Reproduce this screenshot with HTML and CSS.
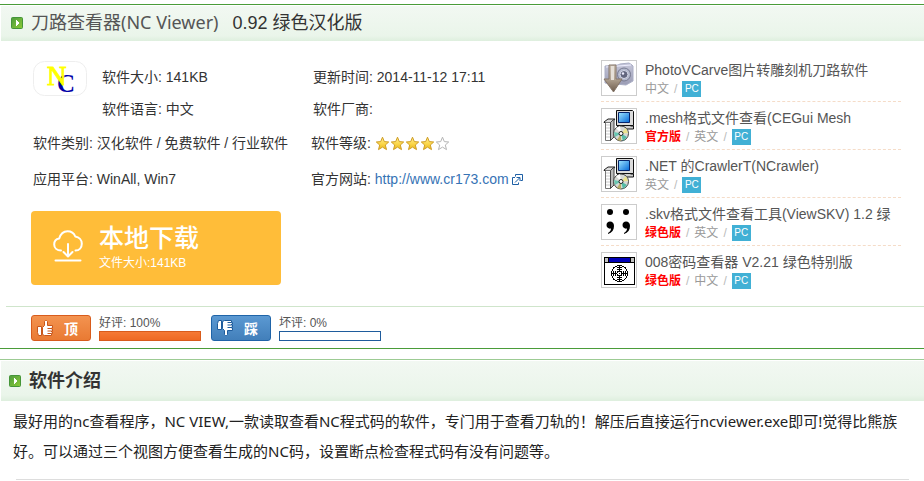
FILE: index.html
```html
<!DOCTYPE html>
<html lang="zh-CN">
<head>
<meta charset="utf-8">
<title>刀路查看器(NC Viewer)</title>
<link rel="stylesheet" href="styles.css">
</head>
<body>
<svg class="defs" aria-hidden="true">
  <defs>
    <linearGradient id="gold" x1="0" y1="0" x2="0" y2="1">
      <stop offset="0" stop-color="#fff0a0"/><stop offset=".5" stop-color="#fbd84e"/><stop offset="1" stop-color="#e9b91c"/>
    </linearGradient>
    <linearGradient id="leaf" x1="0" y1="0" x2="1" y2="1">
      <stop offset="0" stop-color="#4d9c3e"/><stop offset="1" stop-color="#8ccb36"/>
    </linearGradient>
    <linearGradient id="screen" x1="0" y1="0" x2="1" y2="1">
      <stop offset="0" stop-color="#9fe6ff"/><stop offset="1" stop-color="#0468d8"/>
    </linearGradient>
    <linearGradient id="metal" x1="0" y1="0" x2="0" y2="1">
      <stop offset="0" stop-color="#c9bdae"/><stop offset=".5" stop-color="#b3a594"/><stop offset="1" stop-color="#6d5b4c"/>
    </linearGradient>
    <linearGradient id="camera" x1="0" y1="0" x2="0" y2="1">
      <stop offset="0" stop-color="#c6c7da"/><stop offset="1" stop-color="#9a9cb4"/>
    </linearGradient>
    <symbol id="arrow" viewBox="0 0 12 12">
      <rect x=".5" y=".5" width="11" height="11" rx="1" fill="url(#leaf)" stroke="#459539"/>
      <path d="M5 3v6h1V8h1V7h1V5H7V4H6V3z" fill="#fff"/>
    </symbol>
    <symbol id="star" viewBox="0 0 15 15">
      <path d="M7.5 1.2 9.3 5.6l4.400.4-3.400 3 1.200 4.600-4-2.500-4 2.500L4.700 9 1.300 6l4.400-.4z" stroke-linejoin="round"/>
    </symbol>
    <symbol id="thumb" viewBox="0 0 16 16">
      <path d="M.500 6.500h4v9h-3l-1-3zM5.500 7.500l2-2v-4l1-1h1l1 1v4h5v2.500h-1v1h1v2h-1v1h1v1.500h-1v2H7.500l-2-1z" fill="#fff" stroke-linejoin="round"/>
      <path d="M10.500 8.500h4M10.500 11h4M10.500 13.500h4" fill="none"/>
    </symbol>
    <symbol id="setup" viewBox="0 0 32 32">
      <path d="M13.500.500h16l1 1v14h-17z" fill="#dcdcdc" stroke="#111"/>
      <path d="M15.500 2.500h11v10h-11z" fill="url(#screen)" stroke="#06246b"/>
      <path d="M27.500 16h3v3h-16v-3" fill="#cfcfcf" stroke="#111"/>
      <path d="M1 12l4-3h7l-3 3.500H1z" fill="#ddd" stroke="#222"/>
      <path d="M2.500 12.500h5v18h-5z" fill="#fff" stroke="#777"/>
      <path d="M3 15h4M3 18h4M3 21h4M3 24h4M3 27h4" stroke="#ccc"/>
      <path d="M7.500 12.500 11 9v18l-3.500 3.500z" fill="#bbb" stroke="#444"/>
      <circle cx="18" cy="23.500" r="7.500" fill="#d7d9d5" stroke="#444"/>
      <path d="M18 23.500 13 18l4-2z" fill="#fff"/><path d="M18 23.500 11 22l1 5z" fill="#68c7b1"/>
      <path d="M18 23.500 23 18l2 5z" fill="#ede48d"/><path d="M18 23.500 20 31l4-4z" fill="#55bca6"/>
      <path d="M18 23.500 14 30l4 1z" fill="#b8ad64"/>
      <circle cx="18" cy="23.500" r="2" fill="#fff" stroke="#222"/>
    </symbol>
  </defs>
</svg>

<section class="panel">
  <header class="bar">
    <svg class="bullet"><use href="#arrow"/></svg>
    <h1 class="name"><span class="product">刀路查看器(NC Viewer)</span> <span>0.92 绿色汉化版</span></h1>
  </header>

  <div class="main">
    <div class="info">
      <div class="top">
        <svg class="logo" viewBox="0 0 54 35" role="img" aria-label="NC">
          <rect x=".5" y=".5" width="53" height="34" rx="11" fill="#fff" stroke="#eee"/>
          <text x="24" y="31" class="logo-c">C</text>
          <text x="14" y="24" class="logo-n">N</text>
        </svg>
        <div class="facts facts-top">
          <span>软件大小: 141KB</span><span>更新时间: 2014-11-12 17:11</span>
          <span>软件语言: 中文</span><span>软件厂商:</span>
        </div>
      </div>
      <div class="facts facts-low">
        <span>软件类别: 汉化软件 / 免费软件 / 行业软件</span>
        <span class="rating">软件等级:
          <span class="stars" role="img" aria-label="4/5">
            <svg class="star"><use href="#star"/></svg><svg class="star"><use href="#star"/></svg><svg class="star"><use href="#star"/></svg><svg class="star"><use href="#star"/></svg><svg class="star empty"><use href="#star"/></svg>
          </span>
        </span>
        <span>应用平台: WinAll, Win7</span>
        <span>官方网站: <a class="site" href="#">http://www.cr173.com<svg class="external" viewBox="0 0 11 11"><path d="M3.500.500h7v6h-2M3.500.500v2M3 3.500H.500v7h6v-2M3 8.500l4.500-4.500M4.500 3.500h3.500v3.500" fill="none" stroke="#1d5fa5"/></svg></a></span>
      </div>
      <a class="download" href="#">
        <svg class="cloud" viewBox="0 0 30 32"><path d="M8 20.500C4 20.500 1.200 18 1.200 14.500c0-3.300 2-5.500 5-6C7.500 4 10.500 1.200 14.500 1.200c4 0 6.500 2 7.800 5.300 3.800.5 6.500 3.500 6.500 7.200 0 3.800-2.500 6.800-6.300 6.800M15 14v12M10.500 22l4.500 4.500 4.500-4.500M2.500 30.500h25" fill="none" stroke="#fff" stroke-width="2" stroke-linecap="round" stroke-linejoin="round"/></svg>
        <span class="download-text"><span class="download-title">本地下载</span><span class="download-size">文件大小:141KB</span></span>
      </a>
    </div>

    <ul class="related">
      <li>
        <svg class="thumbnail" viewBox="0 0 32 32">
          <path d="M2 4 15 3l2-1 9-1 3 2 1 1v15l-7 4-21-2z" fill="url(#camera)" stroke="#aaaec5"/>
          <path d="M3 5 28 3" stroke="#eef"/>
          <circle cx="21" cy="12.500" r="6.500" fill="#b4b9cd" stroke="#777a90"/>
          <circle cx="21" cy="12.500" r="4" fill="#62667e" stroke="#d7daea"/>
          <circle cx="20" cy="11.500" r="1.200" fill="#eef"/>
          <path d="M6 3h7v14h6L10.500 30 1 17h5z" fill="url(#metal)" stroke="#85766a"/>
          <path d="M8 4h3v14H8z" fill="#e6e0d8"/>
        </svg>
        <div><a class="soft" href="#">PhotoVCarve图片转雕刻机刀路软件</a><p class="meta"><span>中文</span><i>/</i><b class="pc">PC</b></p></div>
      </li>
      <li>
        <svg class="thumbnail"><use href="#setup"/></svg>
        <div><a class="soft" href="#">.mesh格式文件查看(CEGui Mesh</a><p class="meta"><strong>官方版</strong><i>/</i><span>英文</span><i>/</i><b class="pc">PC</b></p></div>
      </li>
      <li>
        <svg class="thumbnail"><use href="#setup"/></svg>
        <div><a class="soft" href="#">.NET 的CrawlerT(NCrawler)</a><p class="meta"><span>英文</span><i>/</i><b class="pc">PC</b></p></div>
      </li>
      <li>
        <svg class="thumbnail" viewBox="0 0 32 32">
          <circle cx="7" cy="6" r="3"/><circle cx="23" cy="6" r="3"/>
          <path d="M7 15.500c2.500 0 4 1.600 4 4.500 0 4-2 6.800-6 8v-1c2-1.200 3-2.800 3-4.500-2.500.6-4.500-1-4.500-3.500 0-2 1.500-3.500 3.500-3.500zM23 15.500c2.500 0 4 1.600 4 4.500 0 4-2 6.800-6 8v-1c2-1.200 3-2.800 3-4.500-2.500.6-4.500-1-4.500-3.500 0-2 1.500-3.500 3.500-3.500z"/>
        </svg>
        <div><a class="soft" href="#">.skv格式文件查看工具(ViewSKV) 1.2 绿</a><p class="meta"><strong>绿色版</strong><i>/</i><span>英文</span><i>/</i><b class="pc">PC</b></p></div>
      </li>
      <li>
        <svg class="thumbnail" viewBox="0 0 32 32" shape-rendering="crispEdges">
          <path d="M1.500 3.500h30v27h-30z" fill="#fff" stroke="#000"/>
          <path d="M2 4h29v4H2z" fill="#0000b8"/><path d="M2 4h3v4H2zM28 4h3v4h-3z" fill="#c0c0c0"/>
          <path d="M1 8.500h31M5.500 4v4M27.500 4v4" stroke="#000"/>
          <circle cx="16.500" cy="19.500" r="8" fill="none" stroke="#000"/>
          <circle cx="16.500" cy="19.500" r="2.500" fill="none" stroke="#000"/>
          <path d="M16.500 11v6M16.500 22v6M8 19.500h6M19 19.500h6M14 13.500h5M14 15.500h5M14 23.500h5M14 25.500h5M10.500 17v5M12.500 17v5M20.500 17v5M22.500 17v5M16 19.500h1" fill="none" stroke="#000"/>
        </svg>
        <div><a class="soft" href="#">008密码查看器 V2.21 绿色特别版</a><p class="meta"><strong>绿色版</strong><i>/</i><span>中文</span><i>/</i><b class="pc">PC</b></p></div>
      </li>
    </ul>
  </div>

  <div class="votes">
    <button class="vote up" type="button"><svg class="hand"><use href="#thumb"/></svg>顶</button>
    <div class="score good"><span>好评: 100%</span><div class="track"><div class="fill" style="width:100%"></div></div></div>
    <button class="vote down" type="button"><svg class="hand"><use href="#thumb"/></svg>踩</button>
    <div class="score bad"><span>坏评: 0%</span><div class="track"><div class="fill" style="width:0%"></div></div></div>
  </div>
</section>

<section class="intro">
  <header class="bar intro-bar">
    <svg class="bullet"><use href="#arrow"/></svg>
    <h2 class="name">软件介绍</h2>
  </header>
  <p class="description">最好用的nc查看程序，NC VIEW,一款读取查看NC程式码的软件，专门用于查看刀轨的！解压后直接运行ncviewer.exe即可!觉得比熊族好。可以通过三个视图方便查看生成的NC码，设置断点检查程式码有没有问题等。</p>
  <hr class="rule">
</section>
</body>
</html>
```

FILE: styles.css
```css
* {
  box-sizing: border-box;
}

body {
  margin: 0;
  padding-top: 4px;
  background: #fff;
  color: #333;
  font: 14px/20px "Liberation Sans", "Noto Sans CJK SC", sans-serif;
}

h1, h2, p, ul {
  margin: 0;
  padding: 0;
}

a {
  text-decoration: none;
}

svg {
  display: block;
  flex: none;
}

.defs {
  position: absolute;
  width: 0;
  height: 0;
}

.panel {
  border-top: 1px solid #4a9c39;
  border-bottom: 1px solid #4a9c39;
}

.bar {
  display: flex;
  align-items: center;
  gap: 8px;
  height: 36px;
  margin-left: 1px;
  padding: 0 10px 2px;
  border-top: 1px solid #fff;
  background: linear-gradient(#f2f8f2, #eaf5ea 85%, #deefde);
}

.bullet {
  width: 12px;
  height: 12px;
}

.name {
  font-size: 18px;
  line-height: 26px;
  font-weight: 400;
}

.name span + span {
  margin-left: 9px;
}

.product {
  color: #555;
  font-family: "Noto Sans", "Noto Sans CJK SC", sans-serif;
}

.main {
  display: flex;
  justify-content: space-between;
  padding: 13px 23px 0 31px;
}

.info {
  padding-top: 7px;
}

.top {
  display: flex;
  gap: 15px;
  padding-left: 2px;
}

.logo {
  width: 54px;
  height: 35px;
}

.logo-n {
  font: 27px "Liberation Serif", serif;
  fill: #ff0;
  stroke: #ff0;
}

.logo-c {
  font: bold 25px "Liberation Serif", serif;
  fill: #0000a8;
}

.facts {
  display: grid;
  white-space: nowrap;
}

.facts-top {
  grid-template-columns: 211px auto;
  row-gap: 12px;
  padding-top: 6px;
}

.facts-low {
  grid-template-columns: 278px auto;
  row-gap: 16px;
  padding: 14px 0 0 2px;
}

.rating,
.stars {
  display: flex;
  align-items: center;
}

.rating {
  gap: 4px;
}

.star {
  width: 15px;
  height: 15px;
  fill: url(#gold);
  stroke: #cf9d22;
}

.empty {
  fill: #fff;
  stroke: #b5b5b5;
}

.site {
  color: #3673b5;
}

.external {
  display: inline-block;
  width: 11px;
  height: 11px;
  margin-left: 3px;
  vertical-align: -1px;
}

.download {
  display: flex;
  align-items: center;
  gap: 16px;
  width: 250px;
  height: 74px;
  margin-top: 22px;
  padding: 0 22px 4px;
  border-radius: 4px;
  background: #ffbd39;
  color: #fff;
}

.cloud {
  width: 30px;
  height: 32px;
}

.download-text {
  display: flex;
  flex-direction: column;
}

.download-title {
  font-size: 25px;
  line-height: 34px;
  font-weight: 500;
}

.download-size {
  font-size: 12px;
  line-height: 16px;
}

.related {
  flex: 0 0 300px;
  list-style: none;
}

.related li {
  display: flex;
  gap: 8px;
  height: 48px;
  padding-top: 6px;
  border-bottom: 1px dashed #f5dcc8;
  white-space: nowrap;
}

.related li:last-child {
  border-bottom: 0;
}

.thumbnail {
  width: 36px;
  height: 36px;
  padding: 1px;
  border: 1px solid #ccc;
}

.soft {
  display: block;
  color: #555;
}

.meta {
  display: flex;
  align-items: center;
  padding-top: 1px;
  color: #999;
  font-size: 12px;
  line-height: 16px;
}

.meta i {
  margin: 0 5px;
  color: #bbb;
  font-style: normal;
}

.meta strong {
  color: #f00;
}

.pc {
  width: 19px;
  background: #41b0d5;
  color: #fff;
  font-size: 10px;
  font-weight: 400;
  text-align: center;
}

.votes {
  display: flex;
  margin: 12px 0 0 6px;
  padding: 8px 0 7px 25px;
  border-top: 1px solid #cfe5cb;
}

.vote {
  display: flex;
  align-items: center;
  gap: 11px;
  width: 60px;
  height: 26px;
  padding: 0 5px;
  border: 1px solid #d85c1c;
  border-radius: 3px;
  background: linear-gradient(#f39350, #e97a33);
  color: #fff;
  font: bold 14px/20px "Noto Sans CJK SC", sans-serif;
}

.down {
  border-color: #1f64a8;
  background: linear-gradient(#5b99d2, #427fba);
}

.hand {
  width: 16px;
  height: 16px;
  stroke: #c9561a;
}

.down .hand {
  stroke: #1f5c9c;
  transform: scaleY(-1);
}

.score {
  width: 102px;
  margin: 0 10px 0 8px;
  color: #555;
  font-size: 12px;
  line-height: 16px;
}

.track {
  height: 10px;
  border: 1px solid #d85c1c;
}

.fill {
  height: 100%;
  background: linear-gradient(#f57a35, #ee6a24);
}

.bad .track {
  border-color: #1f5c9c;
}

.intro {
  margin-top: 10px;
  border-top: 1px solid #9ccb93;
}

.intro-bar {
  height: 41px;
  padding: 0 8px;
}

.intro-bar .name {
  font-weight: 700;
}

.description {
  padding: 5px 13px;
  color: #222;
  font-family: "Noto Sans", "Noto Sans CJK SC", sans-serif;
  font-size: 15px;
  line-height: 30px;
}

.rule {
  height: 1px;
  margin: 8px 15px 0 16px;
  border: 0;
  background: #ddd;
}
```
